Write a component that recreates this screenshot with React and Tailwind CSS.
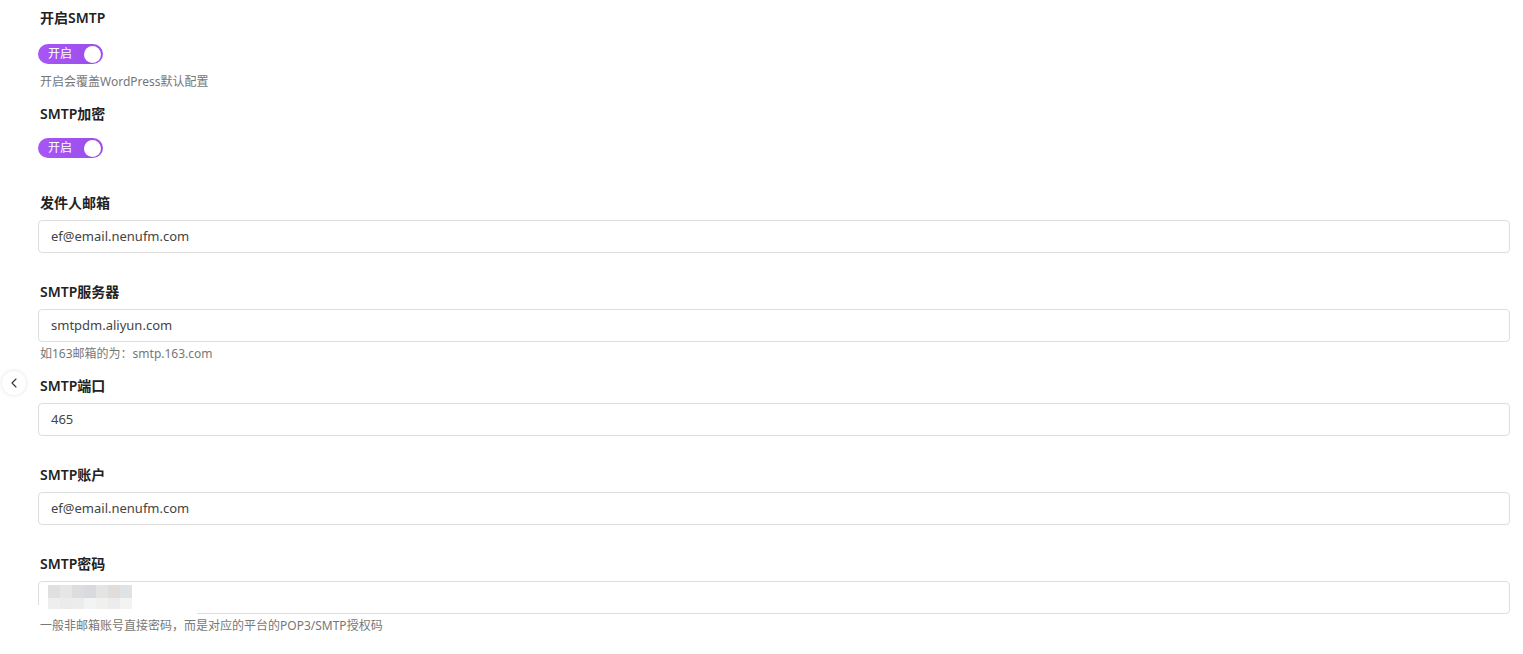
import { ChevronLeft } from 'lucide-react'

const font = { fontFamily: '"Noto Sans", "Noto Sans CJK SC", sans-serif' }

function Toggle({ label = '开启' }) {
  return (
    <div className="flex items-center justify-between w-[65px] h-[20px] rounded-full bg-gradient-to-r from-[#a855f7] to-[#9a4ee8] pl-[10px] pr-[2px]">
      <span className="text-white text-[12px] leading-none">{label}</span>
      <span className="w-[17px] h-[17px] rounded-full bg-white" />
    </div>
  )
}

function Label({ children, className = '' }) {
  return <div className={`text-[14px] leading-[20px] h-[20px] font-semibold text-[#222] ${className}`}>{children}</div>
}

function Hint({ children, className = '' }) {
  return <div className={`text-[12px] leading-[18px] h-[18px] text-[#777] ${className}`}>{children}</div>
}

function TextInput({ value }) {
  return (
    <div className="h-[33px] border border-[#dedede] rounded-[4px] flex items-center px-[12px] text-[13px] text-[#444]">
      {value}
    </div>
  )
}

const mosaic = [
  ['#e0e0e0', '#e6e6e6', '#dcdde0', '#d8dadd', '#e3e5e3', '#e0dddc', '#e0e3e6'],
  ['#eeeeee', '#ebebeb', '#ececec', '#f2f3f5', '#f0f1ee', '#ececec', '#f3f4f2'],
]

function PasswordInput() {
  return (
    <div className="relative h-[33px] border border-[#dedede] rounded-[4px]">
      {/* blurred-out secret */}
      <div className="absolute left-[-2px] bottom-[-2px] w-[160px] h-[10px] bg-white" />
      <div className="absolute left-[9px] top-[3px] flex flex-col">
        {mosaic.map((row, i) => (
          <div key={i} className="flex">
            {row.map((c, j) => (
              <span key={j} className={`w-[12px] ${i === 0 ? 'h-[13px]' : 'h-[11px]'}`} style={{ background: c }} />
            ))}
          </div>
        ))}
      </div>
    </div>
  )
}

export default function App() {
  return (
    <div className="relative w-[1523px] h-[654px] bg-white overflow-hidden" style={font}>
      <button className="absolute left-[2px] top-[371px] w-[24px] h-[24px] rounded-full bg-white shadow-[0_0_4px_rgba(0,0,0,0.12)] flex items-center justify-center text-[#333]">
        <ChevronLeft size={16} strokeWidth={1.6} />
      </button>

      <div className="pl-[38px] pr-[13px] pt-[8px]">
        <Label className="pl-[2px]">开启SMTP</Label>
        <div className="mt-[16px]">
          <Toggle />
        </div>
        <Hint className="mt-[9px] pl-[2px]">开启会覆盖WordPress默认配置</Hint>

        <Label className="mt-[13px] pl-[2px]">SMTP加密</Label>
        <div className="mt-[14px]">
          <Toggle />
        </div>

        <Label className="mt-[35px] pl-[2px]">发件人邮箱</Label>
        <div className="mt-[7px]">
          <TextInput value="ef@email.nenufm.com" />
        </div>

        <Label className="mt-[29px] pl-[2px]">SMTP服务器</Label>
        <div className="mt-[7px]">
          <TextInput value="smtpdm.aliyun.com" />
        </div>
        <Hint className="mt-[3px] pl-[2px]">如163邮箱的为：smtp.163.com</Hint>

        <Label className="mt-[13px] pl-[2px]">SMTP端口</Label>
        <div className="mt-[7px]">
          <TextInput value="465" />
        </div>

        <Label className="mt-[29px] pl-[2px]">SMTP账户</Label>
        <div className="mt-[7px]">
          <TextInput value="ef@email.nenufm.com" />
        </div>

        <Label className="mt-[29px] pl-[2px]">SMTP密码</Label>
        <div className="mt-[7px]">
          <PasswordInput />
        </div>
        <Hint className="mt-[3px] pl-[2px]">一般非邮箱账号直接密码，而是对应的平台的POP3/SMTP授权码</Hint>
      </div>
    </div>
  )
}
